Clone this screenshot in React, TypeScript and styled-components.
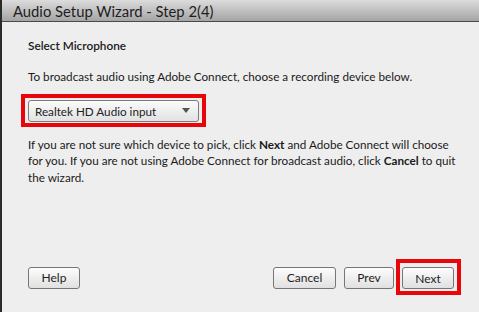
import React from "react";
import styled, { createGlobalStyle } from "styled-components";

const Global = createGlobalStyle`
  html, body { margin: 0; padding: 0; overflow: hidden; background: #eeeeee; }
  * { box-sizing: border-box; }
`;

const Window = styled.div`
  width: 479px;
  height: 312px;
  display: flex;
  flex-direction: column;
  background: #eeeeee;
  border-left: 2px solid #2a2a2a;
  font-family: Lato, "Liberation Sans", sans-serif;
  color: #1a1a1a;
`;

const TitleBar = styled.div`
  height: 22px;
  flex: none;
  display: flex;
  align-items: center;
  padding-left: 11px;
  background: linear-gradient(#dcdcdc, #a4a4a4);
  border-bottom: 1px solid #4a4a4a;
  font-size: 14.8px;
  color: #1e1e1e;
`;

const Content = styled.div`
  flex: 1;
  display: flex;
  flex-direction: column;
  padding: 16px 0 23px 26px;
`;

const Heading = styled.div`
  font-size: 11.8px;
  font-weight: 600;
  line-height: 16px;
`;

const Text = styled.p<{ $top: number }>`
  margin: ${(p) => p.$top}px 0 0;
  font-size: 11.7px;
  line-height: 16.5px;
  width: 450px;
  white-space: nowrap;
  b { font-weight: 700; }
`;

const Highlight = styled.div<{ $t: number; $r: number; $b: number; $l: number }>`
  position: relative;
  align-self: flex-start;
  &::after {
    content: "";
    position: absolute;
    top: ${(p) => -p.$t}px;
    right: ${(p) => -p.$r}px;
    bottom: ${(p) => -p.$b}px;
    left: ${(p) => -p.$l}px;
    border: 4px solid #e8060a;
    pointer-events: none;
  }
`;

const SelectBox = styled.div`
  width: 171px;
  height: 22px;
  display: flex;
  align-items: center;
  justify-content: space-between;
  padding: 0 6px 0 6px;
  border: 1px solid #7c7c7c;
  border-radius: 3px;
  background: linear-gradient(#fbfbfb, #e2e2e2);
  font-size: 11.7px;
  color: #222;
`;

const Arrow = styled.span`
  width: 0;
  height: 0;
  border-left: 4px solid transparent;
  border-right: 4px solid transparent;
  border-top: 5px solid #555;
  margin-right: 2px;
`;

const Footer = styled.div`
  margin-top: auto;
  display: flex;
  align-items: center;
  padding-right: 25px;
`;

const Button = styled.button<{ $w: number }>`
  width: ${(p) => p.$w}px;
  height: 22px;
  padding: 0;
  border: 1px solid #767676;
  border-radius: 3px;
  background: linear-gradient(#fdfdfd, #e0e0e0);
  font-family: Lato, "Liberation Sans", sans-serif;
  font-size: 12px;
  color: #1e1e1e;
`;

const Spacer = styled.div`
  flex: 1;
`;

const Group = styled.div`
  display: flex;
  gap: 8px;
`;

export default function App() {
  return (
    <>
      <Global />
      <Window>
        <TitleBar>Audio Setup Wizard - Step 2(4)</TitleBar>
        <Content>
          <Heading>Select Microphone</Heading>
          <Text $top={14}>
            To broadcast audio using Adobe Connect, choose a recording device below.
          </Text>
          <div style={{ height: 15 }} />
          <Highlight $t={6} $r={7} $b={5} $l={7}>
            <SelectBox>
              <span>Realtek HD Audio input</span>
              <Arrow />
            </SelectBox>
          </Highlight>
          <Text $top={14}>
            If you are not sure which device to pick, click <b>Next</b> and Adobe Connect will choose
            <br />
            for you. If you are not using Adobe Connect for broadcast audio, click <b>Cancel</b> to quit
            <br />
            the wizard.
          </Text>
          <Footer>
            <Button $w={52}>Help</Button>
            <Spacer />
            <Group>
              <Button $w={63}>Cancel</Button>
              <Button $w={50}>Prev</Button>
              <Highlight $t={8} $r={7} $b={6} $l={6}>
                <Button $w={52}>Next</Button>
              </Highlight>
            </Group>
          </Footer>
        </Content>
      </Window>
    </>
  );
}
